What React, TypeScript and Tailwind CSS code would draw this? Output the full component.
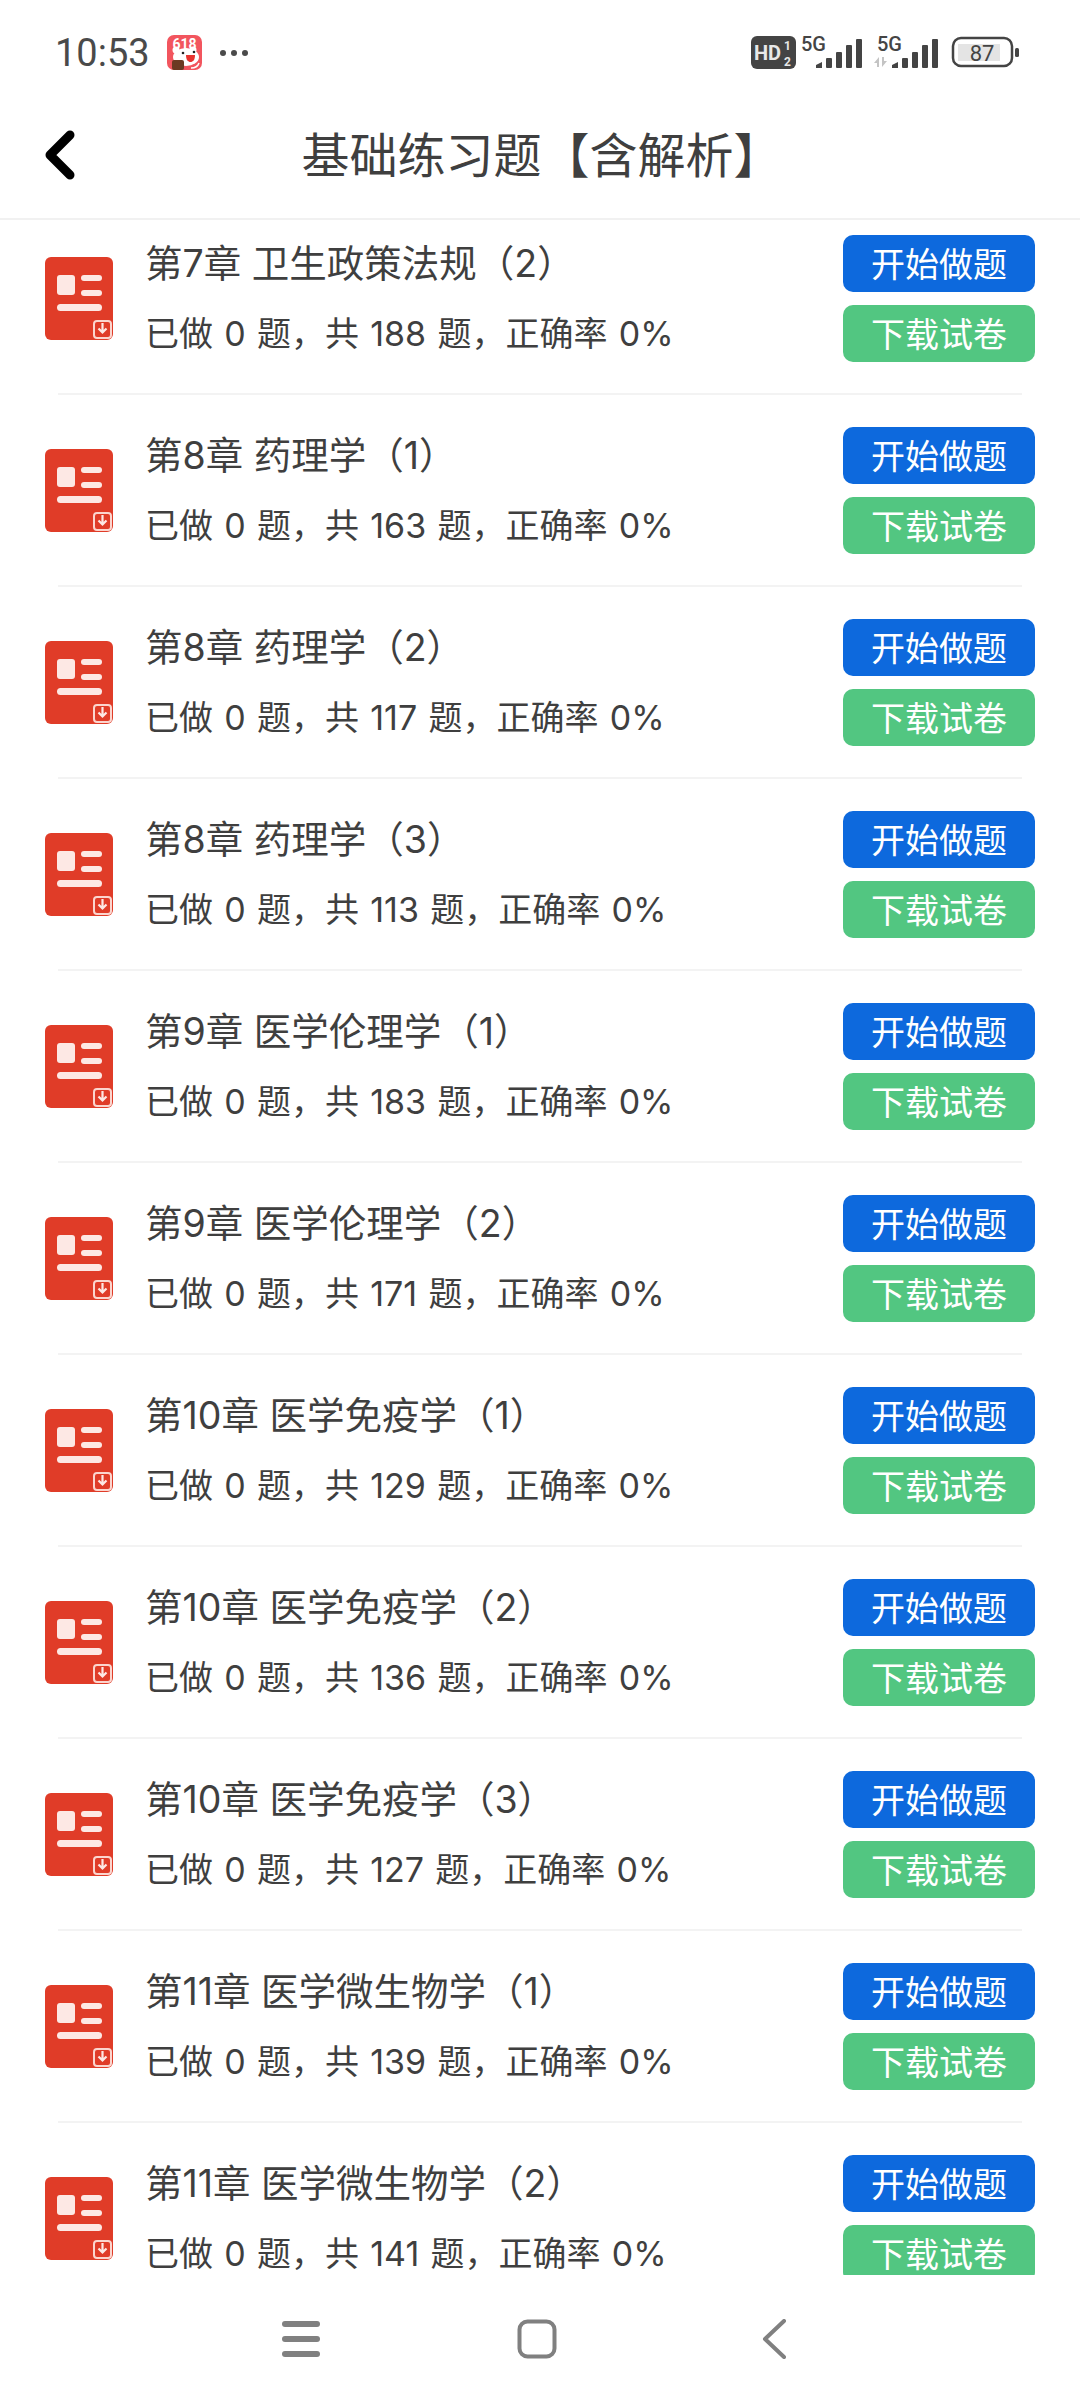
const rows = [
  ["第7章 卫生政策法规（2）", 188],
  ["第8章 药理学（1）", 163],
  ["第8章 药理学（2）", 117],
  ["第8章 药理学（3）", 113],
  ["第9章 医学伦理学（1）", 183],
  ["第9章 医学伦理学（2）", 171],
  ["第10章 医学免疫学（1）", 129],
  ["第10章 医学免疫学（2）", 136],
  ["第10章 医学免疫学（3）", 127],
  ["第11章 医学微生物学（1）", 139],
  ["第11章 医学微生物学（2）", 141],
] as const;

function DocIcon() {
  return (
    <svg width="68" height="83" viewBox="0 0 68 83" className="shrink-0">
      <rect x="0" y="0" width="68" height="83" rx="6" fill="#e03c28" />
      <rect x="12" y="18" width="18" height="20" rx="3" fill="#fde8e4" />
      <rect x="36" y="18" width="21" height="6" rx="3" fill="#fde8e4" />
      <rect x="36" y="33" width="21" height="6" rx="3" fill="#fde8e4" />
      <rect x="12" y="47" width="45" height="7" rx="3.5" fill="#fde8e4" />
      <rect x="49" y="64" width="17" height="17" rx="3" fill="none" stroke="#fbd5ce" strokeWidth="2" />
      <path d="M57.5 66v9M53.5 71.5l4 4 4-4" fill="none" stroke="#fde8e4" strokeWidth="2.2" />
    </svg>
  );
}

function Signal() {
  return (
    <g fill="#444">
      <path d="M0 32l6-3v6H0z" />
      <rect x="10" y="25" width="6" height="10" rx="1" />
      <rect x="20" y="19" width="6" height="16" rx="1" />
      <rect x="30" y="12" width="6" height="23" rx="1" />
      <rect x="40" y="6" width="6" height="29" rx="1" />
    </g>
  );
}

function StatusIcons() {
  return (
    <svg width="268" height="40" viewBox="0 0 268 40" className="shrink-0">
      <rect x="0" y="3" width="45" height="33" rx="6" fill="#444" />
      <text x="3" y="27" fontFamily="Roboto, sans-serif" fontWeight="700" fontSize="20" fill="#e8e8e8">HD</text>
      <text x="33" y="17" fontFamily="Roboto, sans-serif" fontWeight="700" fontSize="12" fill="#e8e8e8">1</text>
      <text x="33" y="33" fontFamily="Roboto, sans-serif" fontWeight="700" fontSize="12" fill="#e8e8e8">2</text>
      <text x="50" y="18" fontFamily="Roboto, sans-serif" fontWeight="500" fontSize="20" fill="#444">5G</text>
      <g transform="translate(65 0)"><Signal /></g>
      <text x="126" y="18" fontFamily="Roboto, sans-serif" fontWeight="500" fontSize="20" fill="#444">5G</text>
      <path d="M128 24l-5 6h3v4h2zM131 34l5-6h-3v-4h-2z" fill="#c4c4c4" />
      <g transform="translate(141 0)"><Signal /></g>
      <rect x="202" y="5" width="59" height="28" rx="8" fill="none" stroke="#444" strokeWidth="2.5" />
      <rect x="207" y="11" width="42" height="17" fill="#e4e4e4" />
      <text x="231" y="28" textAnchor="middle" fontFamily="Roboto, sans-serif" fontSize="22" fill="#444">87</text>
      <rect x="264" y="15" width="4" height="9" rx="1.5" fill="#444" />
    </svg>
  );
}

function AppIcon() {
  return (
    <svg width="35" height="35" viewBox="0 0 35 35" className="shrink-0">
      <rect width="35" height="35" rx="7" fill="#f2555e" />
      <text x="17.5" y="14" textAnchor="middle" fontFamily="Roboto, sans-serif" fontWeight="700" fontSize="14" fill="#fff">618</text>
      <circle cx="9" cy="15" r="3.5" fill="#fff" />
      <circle cx="26" cy="15" r="3.5" fill="#fff" />
      <ellipse cx="19" cy="22" rx="13" ry="9" fill="#fff" />
      <path d="M19 20h9c0 5-2 7-4.5 7S19 25 19 20z" fill="#e8332f" />
      <rect x="5" y="25" width="12" height="10" rx="2" fill="#6b3a22" />
      <circle cx="16" cy="18" r="1.3" fill="#222" />
      <circle cx="27" cy="17" r="1.3" fill="#222" />
      <path d="M24 33c4 0 7-2 8-5" fill="none" stroke="#fff" strokeWidth="1.5" />
    </svg>
  );
}

export default function App() {
  return (
    <div
      className="w-[1080px] h-[2401px] bg-white flex flex-col overflow-hidden text-[#3f3f3f]"
      style={{ fontFamily: '"Noto Sans CJK SC", sans-serif' }}
    >
      <div className="h-[103px] shrink-0 flex items-start justify-between pt-[33px] pl-[55px] pr-[61px]">
        <div className="flex items-center mt-[2px] h-[35px]">
          <span className="text-[38px] leading-[36px] text-[#4a4a4a]" style={{ fontFamily: "Roboto, sans-serif" }}>10:53</span>
          <span className="ml-[17px]"><AppIcon /></span>
          <span className="ml-[18px] flex gap-[5px]">
            <i className="block w-[6px] h-[6px] rounded-full bg-[#4a4a4a]" />
            <i className="block w-[6px] h-[6px] rounded-full bg-[#4a4a4a]" />
            <i className="block w-[6px] h-[6px] rounded-full bg-[#4a4a4a]" />
          </span>
        </div>
        <StatusIcons />
      </div>

      <header className="h-[117px] shrink-0 relative flex items-center justify-center border-b-2 border-[#f1f1f1] pb-[18px]">
        <svg width="34" height="52" viewBox="0 0 34 52" className="absolute left-[43px] top-[26px]">
          <path d="M27 6L7 26l20 20" fill="none" stroke="#000" strokeWidth="9" strokeLinecap="round" strokeLinejoin="round" />
        </svg>
        <h1 className="text-[48px] leading-[60px] font-normal ml-[3px]">基础练习题【含解析】</h1>
      </header>

      <main className="flex-1 min-h-0 overflow-hidden">
        <div className="-mt-[17px]">
          {rows.map(([title, total]) => (
            <div key={title} className="h-[192px] pl-[45px] pr-[45px] flex flex-col">
              <div className="h-[190px] flex items-center">
                <DocIcon />
                <div className="flex-1 min-w-0 ml-[32px] mt-[2px]" style={{ fontFamily: 'Inter, "Noto Sans CJK SC", sans-serif' }}>
                  <div className="text-[37.5px] leading-[50px] mb-[20px] whitespace-nowrap">{title}</div>
                  <div className="text-[34px] leading-[50px] whitespace-nowrap [word-spacing:1.7px]">
                    已做 0 题，共 {total} 题，正确率 0%
                  </div>
                </div>
                <div className="flex flex-col gap-[13px]">
                  <button className="w-[192px] h-[57px] rounded-[10px] bg-[#0d69dd] text-white text-[34px] leading-none">开始做题</button>
                  <button className="w-[192px] h-[57px] rounded-[10px] bg-[#52c681] text-white text-[34px] leading-none">下载试卷</button>
                </div>
              </div>
              <div className="h-[2px] ml-[13px] mr-[13px] bg-[#f3f3f3] shrink-0" />
            </div>
          ))}
        </div>
      </main>

      <nav className="h-[126px] shrink-0 flex items-start pt-[44px] bg-white">
        <div className="flex items-center w-full pl-[282px]">
          <svg width="38" height="38" viewBox="0 0 38 38">
            <rect y="1" width="38" height="6" rx="3" fill="#808080" />
            <rect y="16" width="38" height="6" rx="3" fill="#808080" />
            <rect y="31" width="38" height="6" rx="3" fill="#808080" />
          </svg>
          <svg width="40" height="40" viewBox="0 0 40 40" className="ml-[197px]">
            <rect x="2.5" y="2.5" width="35" height="35" rx="8" fill="none" stroke="#808080" strokeWidth="4" />
          </svg>
          <svg width="26" height="40" viewBox="0 0 26 40" className="ml-[204px]">
            <path d="M23 2L4 20l19 18" fill="none" stroke="#808080" strokeWidth="4" strokeLinecap="round" strokeLinejoin="round" />
          </svg>
        </div>
      </nav>
    </div>
  );
}
